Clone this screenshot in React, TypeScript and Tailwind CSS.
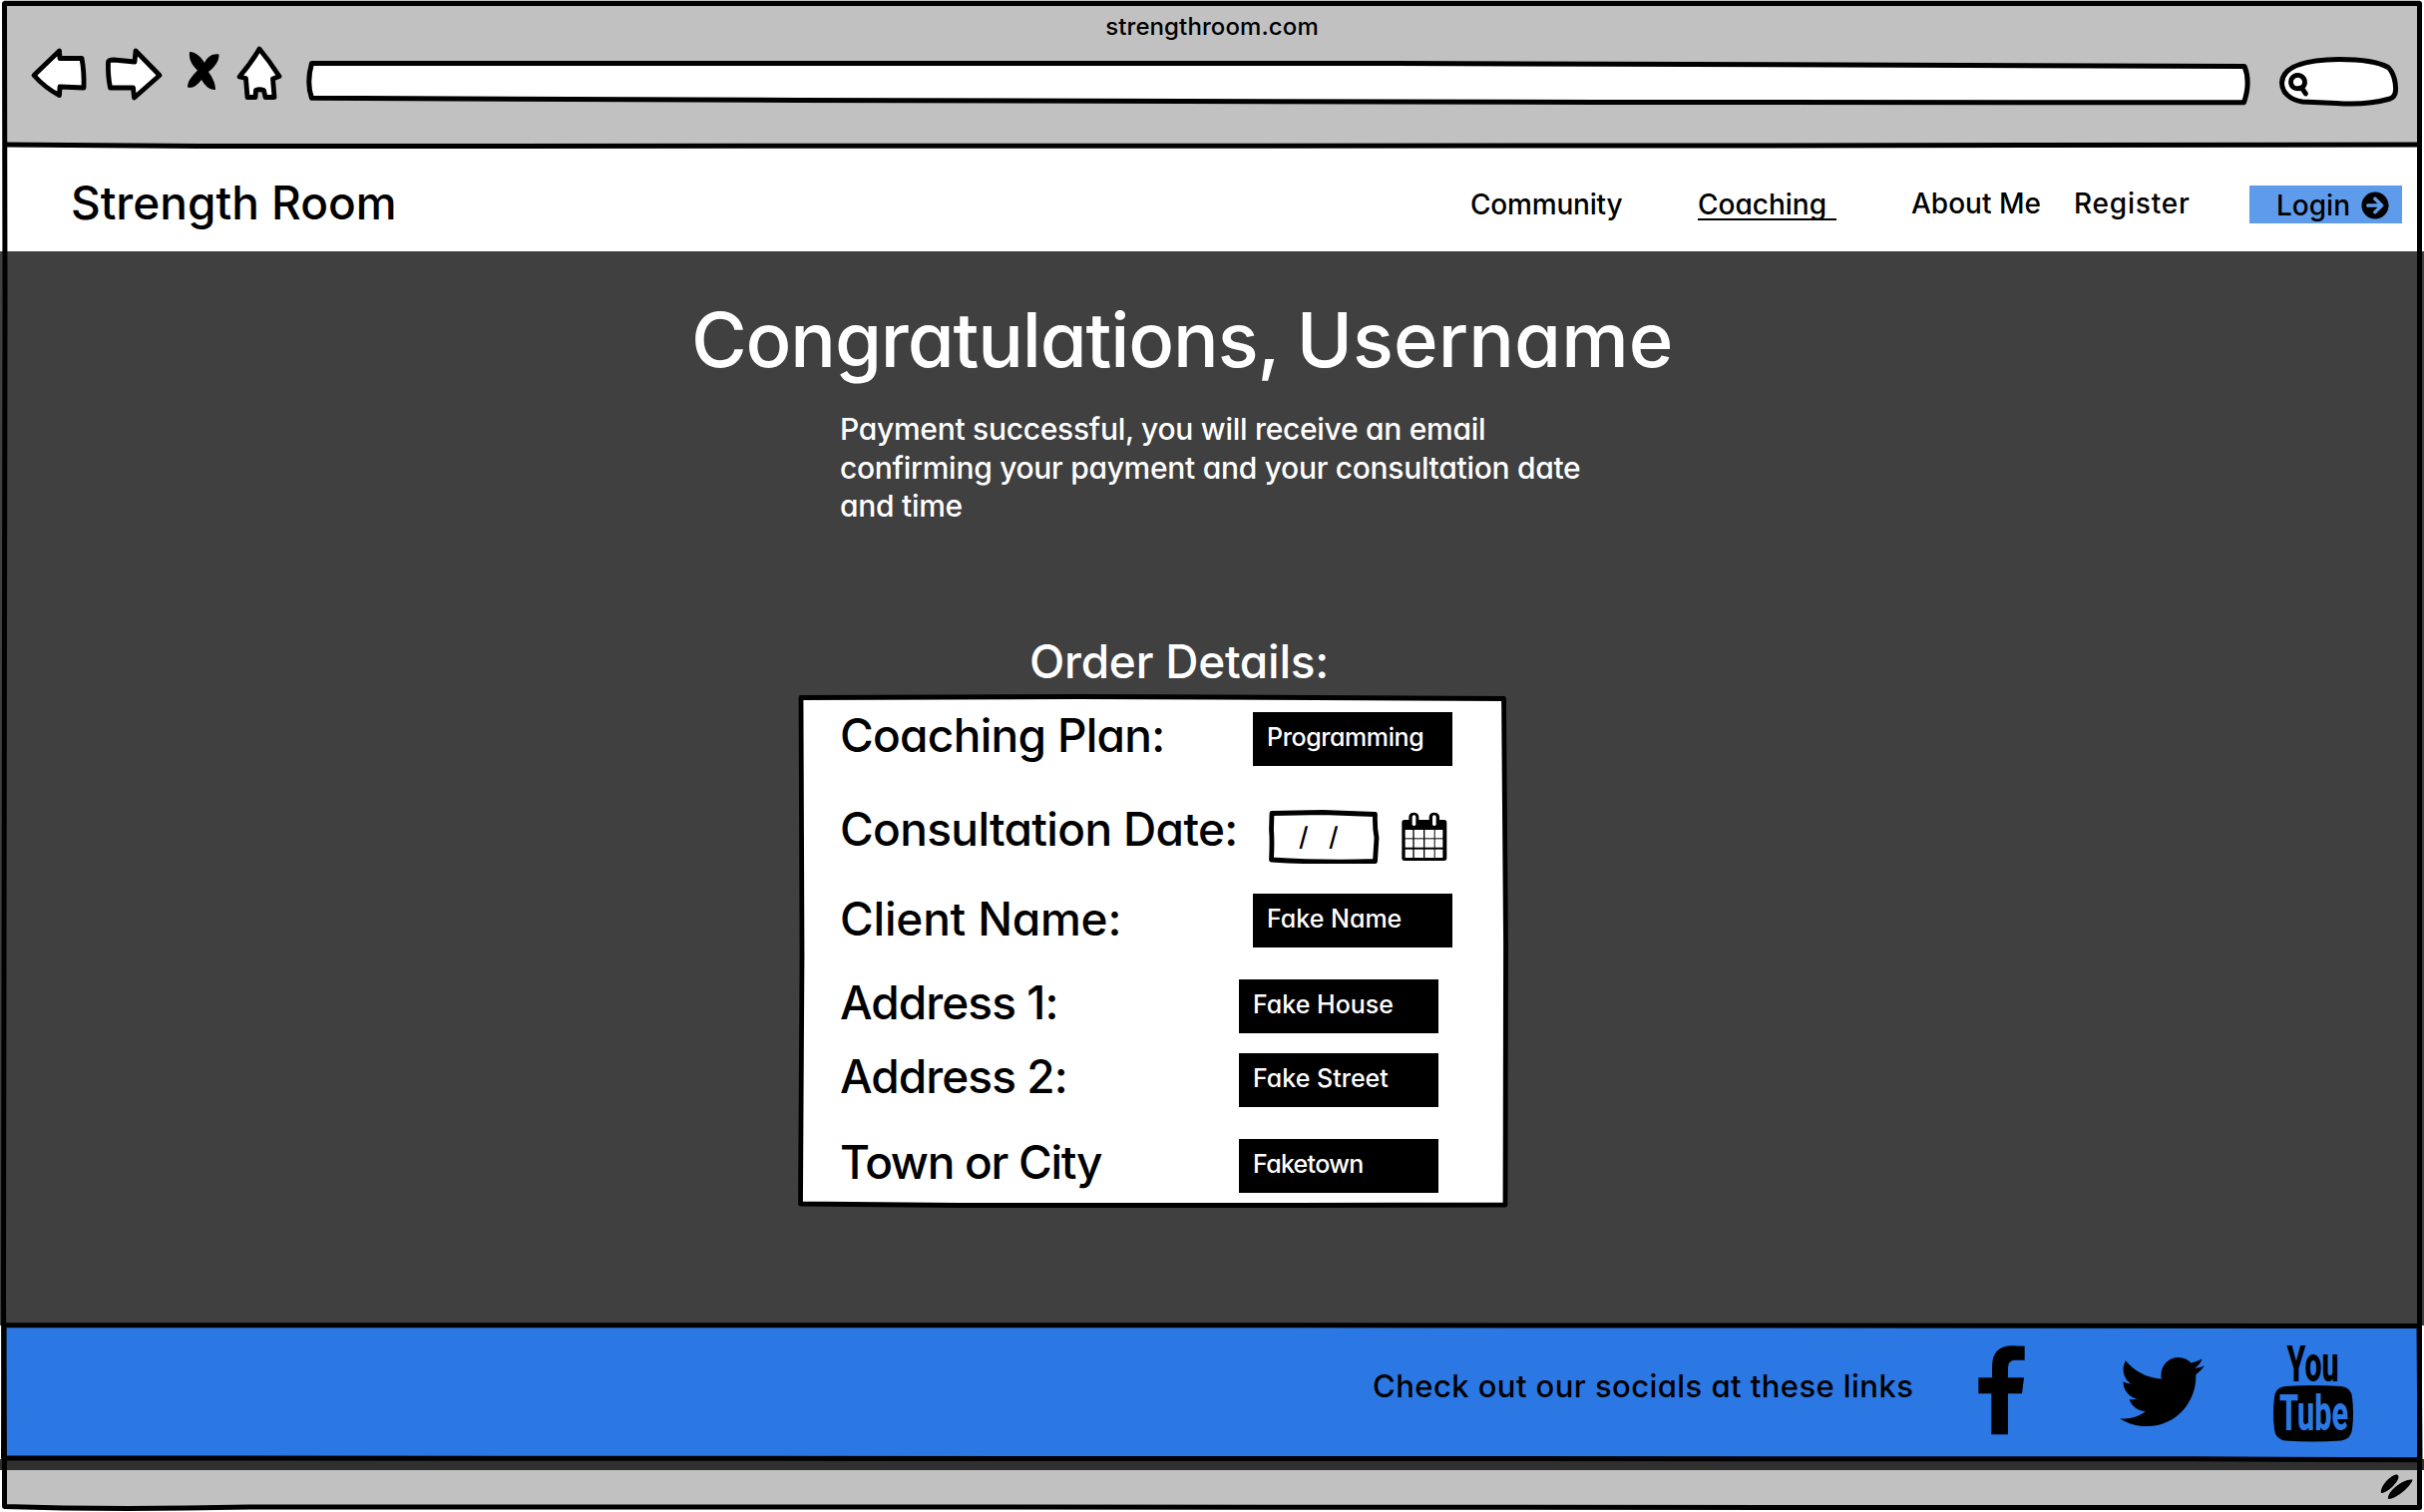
import type { ReactNode } from "react";
import { FaArrowCircleRight, FaTwitter } from "react-icons/fa";

function WindowFrame() {
  return (
    <svg
      className="pointer-events-none absolute inset-0"
      width="2430"
      height="1516"
      viewBox="0 0 2430 1516"
      fill="none"
      stroke="#000"
      strokeWidth="5"
      strokeLinejoin="round"
    >
      <path d="M4.500 3.500H2425.500L2425.500 1470V1511.500L1800 1511.500L900 1511L250 1511Q110 1514 4.500 1510.500V1463L3.500 1300L5 300Z" />
      <path d="M5 145L200 146.500L1700 146L2425 145" />
      <path d="M4 1328.800L1300 1328.800L2425 1329.500L2426 1463.800L2200 1462.800L1300 1462.500L3.500 1462Z" />
    </svg>
  );
}

function NavIcons() {
  return (
    <svg
      className="shrink-0"
      width="260"
      height="60"
      viewBox="30 45 260 60"
      fill="#fff"
      stroke="#000"
      strokeWidth="4.800"
      strokeLinejoin="round"
      strokeLinecap="round"
    >
      <path d="M34 75.500L59.500 51L60 58.500L82 58.500Q84.500 72 84 88L60 87L59.500 95.500Q45 88 34 75.500Z" />
      <path d="M108.500 62Q109 60 114 60L135 62L136 51L160 75.500L134.500 98L133.500 88H110.500Q108 76 108.500 62Z" />
      <path
        stroke="none"
        fill="#000"
        d="M190 52C197 52 202 58 205 63C208 57 213 53.500 219.500 54.500C220 62 214 68 209 72C213 78 216 83 216 90C209 90 205 85 202 80C198 85 194 89 188 87.500C188 80 194 75 198 70.500C193 66 189 60 190 52Z"
      />
      <path d="M260 49Q270 61 280 76.500L273.500 79L275 97.500H266L264.500 90.500Q260 89 256.500 90.500L256 97.500H248L246.500 78.500L240 77Q252 63 260 49Z" />
    </svg>
  );
}

function BrowserChrome() {
  return (
    <header className="mx-1 flex h-[146px] flex-col bg-[#c1c1c1]">
      <p className="h-[45px] pt-[9px] text-center text-2xl leading-9 tracking-[0.1px]">
        strengthroom.com
      </p>
      <div className="flex pl-[26px]">
        <NavIcons />
        <svg
          className="ml-[14px] mt-[9px] shrink-0"
          width="1956"
          height="60"
          viewBox="304 54 1956 60"
          fill="#fff"
          stroke="#000"
          strokeWidth="5"
          strokeLinejoin="round"
        >
          <path d="M312.500 63.500L1400 63.500L2250 66.500Q2256.500 82 2249.500 102.700L1600 102.500L800 100.500L312.500 98.300Q307 83 312.500 63.500Z" />
        </svg>
        <svg
          className="ml-5 mt-[9px] shrink-0"
          width="130"
          height="60"
          viewBox="2280 54 130 60"
          fill="#fff"
          stroke="#000"
          strokeWidth="5"
          strokeLinecap="round"
        >
          <path d="M2287.500 83C2288 70 2302 60 2345 59.500C2372 59.500 2386 63 2394 67.500C2400 73 2402 84 2401.500 91Q2401 97 2396 99C2380 103.500 2362 105 2342 103.500L2308 102C2296 100 2287.500 93 2287.500 83Z" />
          <path strokeWidth="4.800" d="M2296.500 82A7 6.800 0 1 1 2308 87.500Q2303 90 2299 87.500Q2296.500 85.500 2296.500 82ZM2308 89L2311.500 94" />
        </svg>
      </div>
    </header>
  );
}

function SiteNav() {
  return (
    <nav className="mx-1 flex h-[106px] items-start bg-white text-[28px] leading-9">
      <div className="ml-[67px] mt-[29px] w-[1403px] text-[46px] leading-[56px]">
        Strength Room
      </div>
      <a className="mt-[41px] w-[228px] tracking-[-0.2px]">Community</a>
      <a className="mt-[41px]">
        <span className="block h-[34px] w-[139px] border-b-2 border-black">Coaching</span>
      </a>
      <a className="ml-[75px] mt-[40px] w-[163px]">About Me</a>
      <a className="mt-[40px] w-[176px] tracking-[0.8px]">Register</a>
      <button className="mt-[40px] flex h-[38px] w-[153px] items-center bg-[#5f9beb] pl-[27px] pt-0.5">
        Login
        <FaArrowCircleRight className="ml-[11px]" size={28} />
      </button>
    </nav>
  );
}

type Row = {
  label: string;
  labelClass: string;
  rowClass: string;
  value?: string;
  valueClass?: string;
};

const rows: Row[] = [
  { label: "Coaching Plan:", labelClass: "pb-2 tracking-[-0.7px]", rowClass: "", value: "Programming", valueClass: "ml-[14px] tracking-[-0.4px]" },
  { label: "Consultation Date:", labelClass: "pb-[15px] tracking-[-0.65px]", rowClass: "mt-[44px]" },
  { label: "Client Name:", labelClass: "pb-1 tracking-[-0.2px]", rowClass: "mt-[30px]", value: "Fake Name", valueClass: "ml-[14px]" },
  { label: "Address 1:", labelClass: "pb-2 tracking-[-0.95px]", rowClass: "mt-[32px]", value: "Fake House", valueClass: "" },
  { label: "Address 2:", labelClass: "pb-2 tracking-[-0.95px]", rowClass: "mt-[20px]", value: "Fake Street", valueClass: "" },
  { label: "Town or City", labelClass: "pb-2 tracking-[-1.3px]", rowClass: "mt-[32px]", value: "Faketown", valueClass: "tracking-[-0.7px]" },
];

function Badge({ className, children }: { className?: string; children: ReactNode }) {
  return (
    <div className={`flex h-[54px] w-[200px] items-center bg-black pb-0.5 pl-[14px] text-[25px] text-white ${className ?? ""}`}>
      {children}
    </div>
  );
}

function DateField() {
  return (
    <div className="ml-[29px] flex items-center">
      <div className="relative flex h-[54px] w-[112px] items-center pl-[31px] text-[26px]">
        <svg
          className="absolute inset-0"
          width="112"
          height="54"
          viewBox="0 0 112 54"
          fill="none"
          stroke="#000"
          strokeWidth="4.800"
          strokeLinejoin="round"
        >
          <path d="M4 3.500L55 2.500L107.500 4.500Q107 18 109 28L107.500 51.500Q60 53.500 3.500 50Q4.500 30 3.500 20Z" />
        </svg>
        <span className="w-[30px]">/</span>
        <span>/</span>
      </div>
      <svg className="ml-[22px] shrink-0" width="46" height="50" viewBox="464 42 138 150">
        <path d="M465 74Q465 66 473 66H486V56Q488 44 501 44Q514 44 516 56V66H547V56Q549 44 562 44Q576 44 578 56V66H592Q600 66 600 74V181Q600 189 592 189H473Q465 189 465 181Z" />
        <g fill="#fff">
          <rect x="496" y="52" width="11" height="32" rx="5" />
          <rect x="557" y="52" width="11" height="32" rx="5" />
          {[96, 124, 155].map((y) =>
            [475, 502, 534, 565].map((x) => (
              <rect key={`${x}-${y}`} x={x} y={y} width={x === 475 || x === 565 ? 23 : 28} height="25" />
            )),
          )}
        </g>
      </svg>
    </div>
  );
}

function OrderCard() {
  return (
    <section className="relative ml-[801px] mt-[6px] h-[513px] w-[710px] pl-[41px] pt-[17px]">
      <svg
        className="absolute inset-0 overflow-visible"
        width="710"
        height="513"
        viewBox="0 0 710 513"
        fill="#fff"
        stroke="#000"
        strokeWidth="4.800"
        strokeLinejoin="round"
      >
        <path d="M2 2.500L280 1.500L420 2L706.500 3.500L708.500 250L708 511L500 511.500L160 511.500L1.500 510L3 260Z" />
      </svg>
      {rows.map((row) => (
        <div key={row.label} className={`relative flex h-[54px] items-center ${row.rowClass}`}>
          <div className={`w-[400px] whitespace-nowrap text-[46px] leading-[50px] ${row.labelClass}`}>
            {row.label}
          </div>
          {row.value ? <Badge className={row.valueClass}>{row.value}</Badge> : <DateField />}
        </div>
      ))}
    </section>
  );
}

function Footer() {
  return (
    <footer className="mx-1 flex h-[134px] items-start bg-[#2b78e4]">
      <p className="ml-[1372px] mt-[41px] w-[607px] whitespace-nowrap text-[31px] leading-10 tracking-[0.43px]">
        Check out our socials at these links
      </p>
      <svg className="mt-[20px] shrink-0" width="47" height="90" viewBox="129 116 141 270">
        <path d="M269 118V160H240Q219 160 219 183V213H267L261 261H219V384H169V261H130V213H171V180Q171 117 232 117Z" />
      </svg>
      <FaTwitter className="ml-[95px] mt-[24px] shrink-0" size={85} />
      <svg className="ml-[69px] mt-[18px] shrink-0 overflow-visible" width="80" height="100" viewBox="0 0 80 100">
        <text x="13.500" y="37.500" fontSize="50" fontWeight="800" fontFamily="Roboto, sans-serif" textLength="52" lengthAdjust="spacingAndGlyphs">
          You
        </text>
        <path d="M12 43Q40 41 68 43Q78 44 79 54Q81 70 79 86Q78 96 68 97.500Q40 99.500 12 97.500Q2 96 1 86Q-1 70 1 54Q2 44 12 43Z" />
        <text x="6" y="87" fontSize="50" fontWeight="800" fill="#2b78e4" fontFamily="Roboto, sans-serif" textLength="69" lengthAdjust="spacingAndGlyphs">
          Tube
        </text>
      </svg>
    </footer>
  );
}

export default function App() {
  return (
    <div className="relative flex h-[1516px] w-[2430px] flex-col overflow-hidden bg-white font-['Inter',sans-serif] font-medium text-black [font-feature-settings:'cv11']">
      <BrowserChrome />
      <SiteNav />
      <main className="h-[1077px] bg-[#404040]">
        <h1 className="ml-[693px] pt-[43px] text-[76px] leading-[90px] tracking-[-1.15px] text-white [word-spacing:-1px]">
          Congratulations, <span className="tracking-[0.1px]">Username</span>
        </h1>
        <p className="ml-[842px] mt-[26px] w-[760px] text-[30px] leading-[38.500px] tracking-[-0.29px] text-white">
          Payment successful, you will receive an email
          <br />
          confirming your payment and your consultation date
          <br />
          and time
        </p>
        <h2 className="ml-[1032px] mt-[108px] text-[46px] leading-[56px] tracking-[-0.25px] text-white">
          Order Details:
        </h2>
        <OrderCard />
      </main>
      <Footer />
      <div className="h-[11px] bg-[#303030]" />
      <div className="mx-1 flex h-[37px] items-start justify-end bg-[#c1c1c1]">
        <svg className="mr-[6px] mt-[3px]" width="34" height="28" viewBox="2386 1477 34 28">
          <path d="M2387 1497C2386 1489 2398 1478 2403 1478.500Q2406 1480 2403 1485C2399 1491 2392 1497 2387 1497ZM2394 1503C2393 1495 2410 1482 2418.500 1483.500C2418 1489 2403 1503 2394 1503Z" />
        </svg>
      </div>
      <WindowFrame />
    </div>
  );
}
